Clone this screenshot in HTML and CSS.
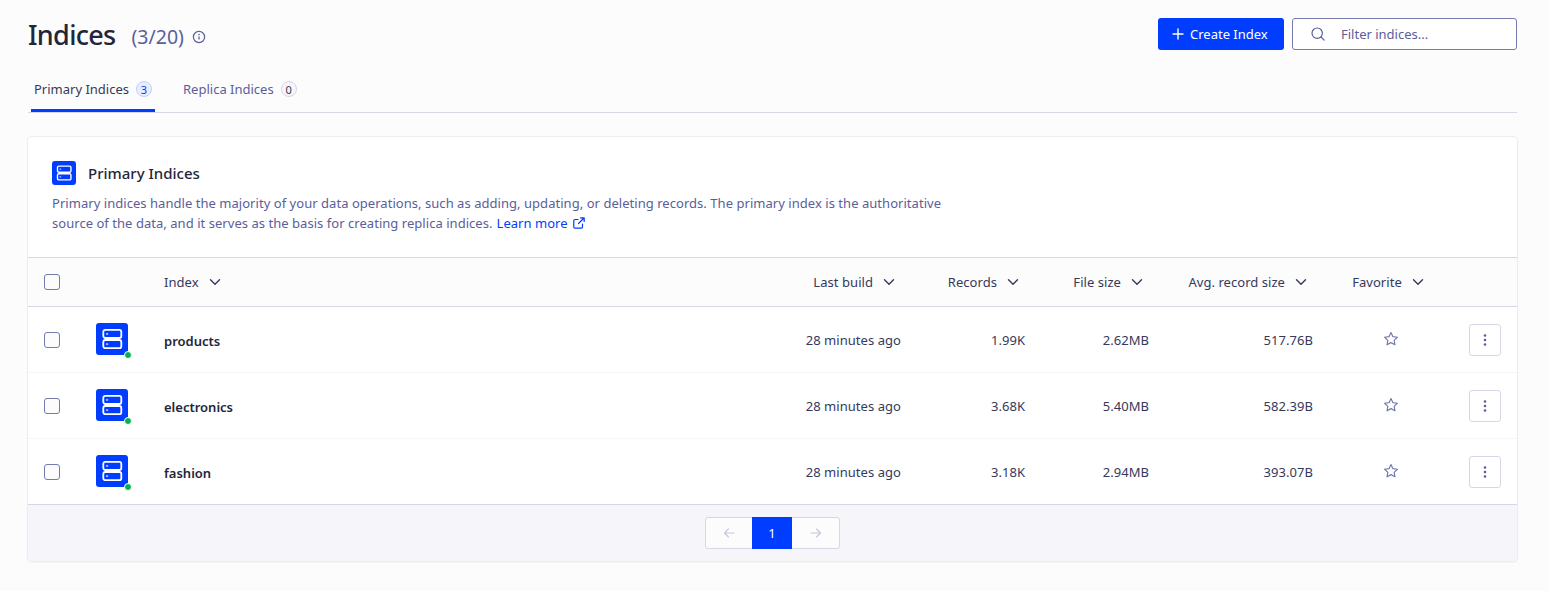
FILE: index.html
```html
<!DOCTYPE html>
<html lang="en">
<head>
<meta charset="utf-8">
<title>Indices</title>
<link rel="stylesheet" href="styles.css">
</head>
<body>
<svg class="defs" width="0" height="0" aria-hidden="true">
  <symbol id="server" viewBox="0 0 32 32">
    <rect x="7.300" y="6.800" width="18" height="8.200" rx="2" fill="none" stroke="#fff" stroke-width="1.800"/>
    <rect x="7.300" y="17" width="18" height="8.200" rx="2" fill="none" stroke="#fff" stroke-width="1.800"/>
    <rect x="10" y="10" width="2.200" height="1.800" fill="#9db4ff"/>
    <rect x="10" y="20.200" width="2.200" height="1.800" fill="#9db4ff"/>
  </symbol>
  <symbol id="chev" viewBox="0 0 12 12">
    <path d="M1.500 3.800 6 8.200l4.500-4.400" fill="none" stroke="currentColor" stroke-width="1.400" stroke-linecap="round" stroke-linejoin="round"/>
  </symbol>
  <symbol id="star" viewBox="0 0 16 16">
    <path d="M8 1.600l1.950 4.050 4.450.6-3.250 3.100.8 4.400L8 11.600l-3.950 2.150.8-4.400L1.600 6.250l4.450-.6z" fill="none" stroke="currentColor" stroke-width="1.200" stroke-linejoin="round"/>
  </symbol>
  <symbol id="dots" viewBox="0 0 16 16">
    <circle cx="8" cy="3.500" r="1.300" fill="currentColor"/><circle cx="8" cy="8" r="1.300" fill="currentColor"/><circle cx="8" cy="12.500" r="1.300" fill="currentColor"/>
  </symbol>
</svg>
<main class="page">
  <header class="top">
    <div class="title">
      <h1>Indices</h1>
      <span class="count">(3/20)</span>
      <svg class="info" viewBox="0 0 14 14" width="14" height="14"><circle cx="7" cy="7" r="5.600" fill="none" stroke="currentColor" stroke-width="1.200"/><path d="M7 6.600v3" stroke="currentColor" stroke-width="1.300"/><circle cx="7" cy="4.600" r=".8" fill="currentColor"/></svg>
    </div>
    <div class="actions">
      <button class="create"><svg viewBox="0 0 12 12" width="12" height="12"><path d="M6 1v10M1 6h10" stroke="#fff" stroke-width="1.400" stroke-linecap="round"/></svg>Create Index</button>
      <label class="filter">
        <svg viewBox="0 0 16 16" width="16" height="16"><circle cx="7.200" cy="7.200" r="5.200" fill="none" stroke="currentColor" stroke-width="1.200"/><path d="M11 11l3.200 3.200" stroke="currentColor" stroke-width="1.200" stroke-linecap="round"/></svg>
        <span>Filter indices...</span>
      </label>
    </div>
  </header>

  <nav class="tabs">
    <a class="tab tab-active">Primary Indices <span class="pill pill-active">3</span></a>
    <a class="tab">Replica Indices <span class="pill">0</span></a>
  </nav>

  <section class="card">
    <div class="intro">
      <div class="intro-head">
        <span class="intro-icon"><svg width="24" height="24"><use href="#server"/></svg></span>
        <h2>Primary Indices</h2>
      </div>
      <div class="desc">
        <p>Primary indices handle the majority of your data operations, such as adding, updating, or deleting records. The primary index is the authoritative</p>
        <div class="desc-line"><p>source of the data, and it serves as the basis for creating replica indices.</p><a class="more">Learn more</a><svg class="ext" viewBox="0 0 14 14" width="14" height="14"><path d="M10.500 8v3a1.200 1.200 0 0 1-1.200 1.200H3a1.200 1.200 0 0 1-1.200-1.200V4.700A1.200 1.200 0 0 1 3 3.500h3M8.500 1.800h3.700v3.700M12 2 6.500 7.500" fill="none" stroke="currentColor" stroke-width="1.200" stroke-linecap="round" stroke-linejoin="round"/></svg></div>
      </div>
    </div>

    <div class="row head">
      <span class="check"></span>
      <span></span>
      <span class="th">Index <svg width="12" height="12"><use href="#chev"/></svg></span>
      <span class="th end">Last build <svg width="12" height="12"><use href="#chev"/></svg></span>
      <span class="th end">Records <svg width="12" height="12"><use href="#chev"/></svg></span>
      <span class="th end">File size <svg width="12" height="12"><use href="#chev"/></svg></span>
      <span class="th end">Avg. record size <svg width="12" height="12"><use href="#chev"/></svg></span>
      <span class="th mid">Favorite <svg width="12" height="12"><use href="#chev"/></svg></span>
      <span></span>
    </div>

    <div class="row item">
      <span class="check"></span>
      <span class="idx"><svg width="32" height="32"><use href="#server"/></svg></span>
      <strong class="name">products</strong>
      <span class="num">28 minutes ago</span><span class="num">1.99K</span><span class="num">2.62MB</span><span class="num">517.76B</span>
      <svg class="fav" width="16" height="16"><use href="#star"/></svg>
      <button class="more-btn"><svg width="16" height="16"><use href="#dots"/></svg></button>
    </div>
    <div class="row item">
      <span class="check"></span>
      <span class="idx"><svg width="32" height="32"><use href="#server"/></svg></span>
      <strong class="name">electronics</strong>
      <span class="num">28 minutes ago</span><span class="num">3.68K</span><span class="num">5.40MB</span><span class="num">582.39B</span>
      <svg class="fav" width="16" height="16"><use href="#star"/></svg>
      <button class="more-btn"><svg width="16" height="16"><use href="#dots"/></svg></button>
    </div>
    <div class="row item last">
      <span class="check"></span>
      <span class="idx"><svg width="32" height="32"><use href="#server"/></svg></span>
      <strong class="name">fashion</strong>
      <span class="num">28 minutes ago</span><span class="num">3.18K</span><span class="num">2.94MB</span><span class="num">393.07B</span>
      <svg class="fav" width="16" height="16"><use href="#star"/></svg>
      <button class="more-btn"><svg width="16" height="16"><use href="#dots"/></svg></button>
    </div>

    <footer class="foot">
      <div class="pager">
        <span class="pg"><svg viewBox="0 0 12 12" width="12" height="12"><path d="M11 6H1.500M5.500 2 1.500 6l4 4" fill="none" stroke="currentColor" stroke-width="1.100" stroke-linecap="round" stroke-linejoin="round"/></svg></span>
        <span class="pg pg-on">1</span>
        <span class="pg"><svg viewBox="0 0 12 12" width="12" height="12"><path d="M1 6h9.500M6.500 2l4 4-4 4" fill="none" stroke="currentColor" stroke-width="1.100" stroke-linecap="round" stroke-linejoin="round"/></svg></span>
      </div>
    </footer>
  </section>
</main>
</body>
</html>
```
FILE: styles.css
```css
* { box-sizing: border-box; }
html, body { margin: 0; height: 100%; }
body {
  background: #fcfcfd;
  color: #23263b;
  font-family: "Noto Sans", "Liberation Sans", sans-serif;
  font-size: 13px;
  line-height: 20px;
  overflow: hidden;
}
.defs { display: block; height: 0; }
.page { padding: 18px 32px 0 28px; }

.top { display: flex; justify-content: space-between; align-items: flex-start; height: 32px; }
.title { display: flex; align-items: center; height: 34px; }
h1 { margin: 0; font-size: 27px; line-height: 34px; font-weight: 500; letter-spacing: -.7px; }
.count { margin-left: 16px; font-size: 19.500px; color: #5a5e9a; position: relative; top: 2px; }
.info { margin-left: 8px; color: #5a5e9a; position: relative; top: 2px; }
.actions { display: flex; gap: 8px; }
.create {
  display: flex; align-items: center; gap: 6px;
  width: 126px; height: 32px; padding: 0 14px;
  background: #003dff; color: #fff; border: 0; border-radius: 3px;
  font: inherit;
}
.filter {
  display: flex; align-items: center; gap: 15px;
  width: 225px; height: 32px; padding: 0 0 0 17px;
  background: #fff; border: 1px solid #777aaf; border-radius: 3px;
  color: #5a5e9a;
}

.tabs { display: flex; gap: 25px; margin-top: 14px; padding-left: 3px; height: 49px; border-bottom: 1px solid #d6d6e7; }
.tab {
  display: flex; align-items: center; gap: 7px;
  height: 48px; padding: 5px 3px 0; color: #5a5e9a;
  border-bottom: 3px solid transparent;
}
.tab-active { color: #36395a; border-bottom-color: #003dff; }
.pill {
  display: inline-flex; align-items: center; justify-content: center;
  width: 16px; height: 16px; border-radius: 50%;
  font-size: 11px; line-height: 1; color: #36395a;
  background: #f5f5fa; border: 1px solid #d6d6e7;
}
.pill-active { background: #e8eeff; border-color: #bcd0ff; color: #003dff; }

.card {
  margin-top: 24px; background: #fff;
  border-radius: 4px;
  box-shadow: 0 0 0 1px #ececf3, 0 1px 2px rgba(35, 38, 59, .12);
}
.intro { height: 120px; padding: 24px 24px 0; }
.intro-head { display: flex; align-items: center; gap: 12px; }
.intro-icon { display: block; width: 24px; height: 24px; background: #003dff; border-radius: 3px; }
.intro-icon svg { display: block; }
h2 { margin: 0; font-size: 15px; line-height: 24px; font-weight: 500; }
.desc { margin-top: 8px; color: #5a5e9a; letter-spacing: .04px; }
.desc p { margin: 0; }
.desc-line { display: flex; align-items: center; gap: 4px; }
.more { color: #003dff; }
.ext { color: #003dff; }

.row {
  display: grid;
  grid-template-columns: 52px 68px minmax(0, 1fr) 120px 124px 124px 164px 153px 35px;
  align-items: center;
  padding: 0 16px;
}
.head { height: 50px; background: #fcfcfd; border-top: 1px solid #d6d6e7; border-bottom: 1px solid #d6d6e7; }
.item { height: 66px; border-bottom: 1px solid #f5f5fa; }
.item.last { height: 65px; border-bottom: 0; }
.th { display: flex; align-items: center; gap: 10px; color: #36395a; letter-spacing: .05px; }
.th.end { justify-content: flex-end; padding-right: 6px; }
.th.mid { justify-content: center; padding-right: 3px; }
.check { display: block; width: 16px; height: 16px; background: #fcfcfd; border: 1px solid #777aaf; border-radius: 3px; }
.idx { position: relative; display: block; width: 32px; height: 32px; margin-bottom: 2px; background: #003dff; border-radius: 3px; }
.idx svg { display: block; }
.idx::after {
  content: ""; position: absolute; right: -4px; bottom: -4px;
  width: 6px; height: 6px; border-radius: 50%;
  background: #06b050; border: 1px solid #fff; box-sizing: content-box;
}
.name { font-weight: 600; color: #23263b; padding-top: 2px; }
.num { text-align: right; color: #36395a; letter-spacing: .05px; }
.fav { justify-self: center; margin: 0 0 2px 3px; color: #777aaf; }
.more-btn {
  display: flex; align-items: center; justify-content: center;
  width: 32px; height: 32px; padding: 0; justify-self: end;
  background: #fff; border: 1px solid #d6d6e7; border-radius: 3px; color: #5a5e9a;
}

.foot {
  display: flex; justify-content: center; align-items: center;
  height: 57px; background: #f5f5fa; border-top: 1px solid #d6d6e7; border-radius: 0 0 4px 4px;
}
.pager { display: flex; height: 32px; border: 1px solid #d6d6e7; border-radius: 3px; background: #fcfcfd; }
.pg { display: flex; align-items: center; justify-content: center; width: 46px; color: #c4c8d8; margin: -1px 0; }
.pg-on { width: 40px; background: #003dff; color: #fff; }
.pg:last-child { width: 47px; }
```
